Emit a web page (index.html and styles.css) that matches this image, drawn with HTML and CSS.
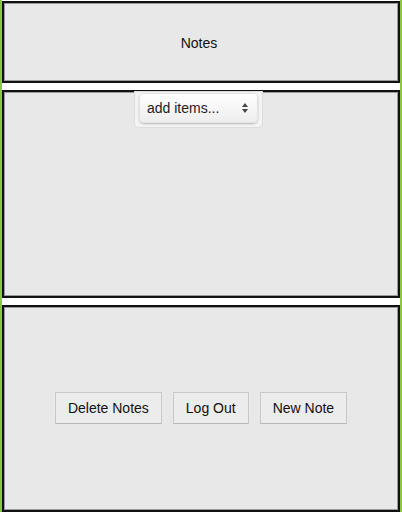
FILE: index.html
```html
<!DOCTYPE html>
<html>
<head>
    <title>Notes</title>
    <link rel="stylesheet" href="styles.css">
</head>
<body>
    <div class="page">
        <div class="panel header">
            <h1>Notes</h1>
        </div>
        <div class="panel items">
            <div class="select-wrap">
                <select id="itemSelect" class="item-select">
                    <option>add items...</option>
                </select>
                <svg class="select-arrows" width="8" height="12" viewBox="0 0 8 12">
                    <path d="M4 1 L7 5 L1 5 Z" fill="#444"/>
                    <path d="M4 11 L7 7 L1 7 Z" fill="#444"/>
                </svg>
            </div>
        </div>
        <div class="panel actions">
            <button type="button" id="deleteNotes">Delete Notes</button>
            <button type="button" id="logOut">Log Out</button>
            <button type="button" id="newNote">New Note</button>
        </div>
    </div>
</body>
</html>
```

FILE: styles.css
```css
html, body {
    margin: 0;
    padding: 0;
}
body {
    font-family: "Liberation Sans", Arial, sans-serif;
    background-color: white;
}
.page {
    width: 402px;
    height: 512px;
    box-sizing: border-box;
    border-left: 2px solid #8dc63f;
    border-right: 2px solid #8dc63f;
    background-color: white;
    padding-top: 1px;
}
.panel {
    background-color: #e8e8e8;
    border: 2px solid #111;
    box-shadow: inset 0 0 0 1px #9a9a9a;
    box-sizing: border-box;
}
.header {
    height: 82px;
    display: flex;
    justify-content: center;
    align-items: center;
    margin-bottom: 7px;
}
.header h1 {
    margin: 0;
    font-size: 14px;
    font-weight: normal;
    color: #111;
    padding-top: 2px;
    padding-right: 4px;
}
.items {
    height: 208px;
    display: flex;
    justify-content: center;
    align-items: flex-start;
    margin-bottom: 7px;
    padding-right: 5px;
}
.select-wrap {
    position: relative;
    background-color: #f4f4f4;
    padding: 1px 4px 4px 4px;
    border-radius: 0 0 4px 4px;
    box-shadow: 0 0 0 1px #dcdcdc;
}
.item-select {
    -webkit-appearance: none;
    appearance: none;
    width: 119px;
    height: 30px;
    padding: 0 0 0 8px;
    font-family: "Liberation Sans", Arial, sans-serif;
    font-size: 14px;
    color: #222;
    border: none;
    border-radius: 5px;
    background: linear-gradient(#ffffff, #ededed);
    box-shadow: 0 1px 2px rgba(0, 0, 0, 0.25), inset 0 0 0 1px #e2e2e2;
    outline: none;
}
.select-arrows {
    position: absolute;
    right: 13px;
    top: 10px;
}
.actions {
    height: 207px;
    display: flex;
    justify-content: center;
    align-items: center;
    gap: 11px;
    padding-bottom: 2px;
}
.actions button {
    height: 32px;
    padding: 0 12px;
    font-family: "Liberation Sans", Arial, sans-serif;
    font-size: 14px;
    color: #111;
    background-color: #ececec;
    border: 1px solid #c8c8c8;
    border-bottom-color: #b8b8b8;
    border-radius: 0;
    cursor: pointer;
}
.actions button:hover {
    background-color: #e0e0e0;
}
```
